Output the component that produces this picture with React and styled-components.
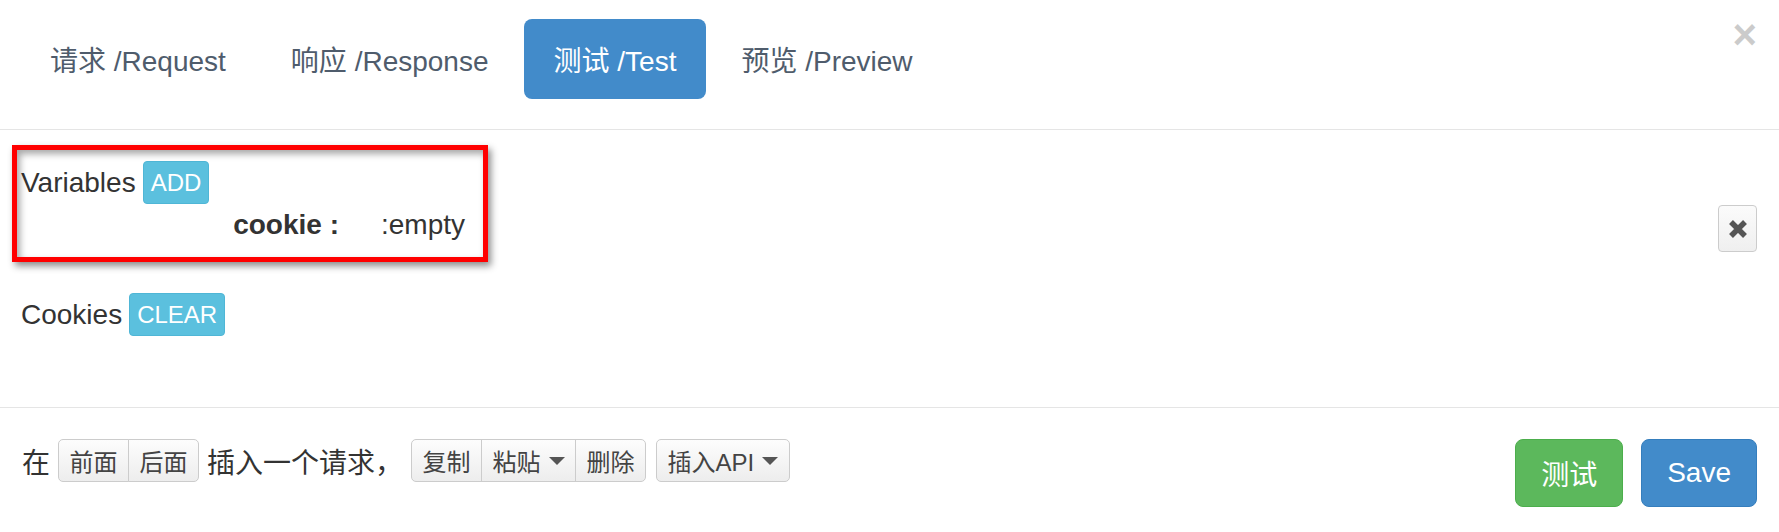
import React from 'react';
import styled, { createGlobalStyle } from 'styled-components';

const GlobalStyle = createGlobalStyle`
  html, body {
    margin: 0;
    padding: 0;
    background: #fff;
  }
  body {
    font-family: "Liberation Sans", Arial, "Noto Sans CJK SC", sans-serif;
    color: #333;
  }
`;

const Modal = styled.div`
  width: 1779px;
  height: 532px;
  background: #fff;
  display: flex;
  flex-direction: column;
`;

const Header = styled.div`
  display: flex;
  align-items: flex-start;
  padding: 19px 22px 30px 20px;
  border-bottom: 1px solid #e5e5e5;
`;

const Tabs = styled.ul`
  display: flex;
  gap: 5px;
  list-style: none;
  margin: 0;
  padding: 0;
`;

const Tab = styled.li`
  height: 80px;
  padding: 0 30px;
  display: flex;
  align-items: center;
  font-size: 28px;
  border-radius: 8px;
  color: ${p => (p.$active ? '#fff' : '#4f5c6c')};
  background: ${p => (p.$active ? '#428bca' : 'transparent')};
  cursor: pointer;
`;

const Close = styled.button`
  margin-left: auto;
  margin-top: 1px;
  border: none;
  background: none;
  padding: 0;
  font-family: "Liberation Sans", Arial, sans-serif;
  font-size: 42px;
  font-weight: bold;
  line-height: 30px;
  color: #000;
  opacity: 0.2;
  cursor: pointer;
`;

const Body = styled.div`
  position: relative;
  height: 277px;
  box-sizing: border-box;
  padding: 31px 22px 0 21px;
  font-size: 28px;
`;

const Row = styled.div`
  display: flex;
  align-items: center;
  gap: 7px;
  height: 43px;
`;

const Label = styled.span`
  display: inline-block;
  font-size: 24px;
  line-height: 41px;
  padding: 0 7px;
  color: #fff;
  background: #5bc0de;
  border: 1px solid #4fb6d6;
  border-radius: 4px;
`;

const VarRow = styled.div`
  display: flex;
  align-items: flex-start;
  height: 47px;
  margin-top: 1px;
`;

const VarKey = styled.span`
  width: 318px;
  text-align: right;
  font-weight: bold;
  line-height: 40px;
  white-space: pre;
`;

const VarValue = styled.span`
  margin-left: 42px;
  line-height: 40px;
`;

const RemoveButton = styled.button`
  margin-left: auto;
  width: 39px;
  height: 47px;
  padding: 0;
  display: flex;
  align-items: center;
  justify-content: center;
  background: linear-gradient(#fbfbfb, #efefef);
  border: 1px solid #ccc;
  border-radius: 4px;
  color: #555;
`;

const CookiesRow = styled(Row)`
  margin-top: 41px;
`;

const Annotation = styled.div`
  position: absolute;
  left: 12px;
  top: 15px;
  width: 476px;
  height: 117px;
  box-sizing: border-box;
  border: 5px solid #ff0000;
  box-shadow: 3px 4px 7px rgba(0, 0, 0, 0.45), inset 3px 4px 7px rgba(0, 0, 0, 0.35);
  pointer-events: none;
`;

const Footer = styled.div`
  flex: 1;
  display: flex;
  align-items: flex-start;
  padding: 31px 22px 0 22px;
  border-top: 1px solid #e5e5e5;
`;

const Inline = styled.div`
  display: flex;
  align-items: center;
  height: 43px;
  font-size: 28px;
`;

const Text = styled.span`
  margin-right: 8px;
`;

const Group = styled.div`
  display: flex;
  margin-right: ${p => p.$gap || 8}px;
`;

const SmallButton = styled.button`
  display: flex;
  align-items: center;
  gap: 8px;
  height: 43px;
  box-sizing: border-box;
  padding: 0 10.5px;
  font-family: "Liberation Sans", Arial, "Noto Sans CJK SC", sans-serif;
  font-size: 24px;
  color: #444;
  background: linear-gradient(#fdfdfd, #ededed);
  border: 1px solid #ccc;
  border-radius: 0;
  & + & {
    margin-left: -1px;
  }
  &:first-child {
    border-top-left-radius: 5px;
    border-bottom-left-radius: 5px;
  }
  &:last-child {
    border-top-right-radius: 5px;
    border-bottom-right-radius: 5px;
  }
`;

const Caret = styled.span`
  width: 0;
  height: 0;
  border-top: 8px solid #555;
  border-left: 8px solid transparent;
  border-right: 8px solid transparent;
`;

const Actions = styled.div`
  margin-left: auto;
  display: flex;
  gap: 18px;
`;

const BigButton = styled.button`
  height: 68px;
  padding: 0 25px;
  font-family: "Liberation Sans", Arial, "Noto Sans CJK SC", sans-serif;
  font-size: 28px;
  color: #fff;
  border-radius: 8px;
  background: ${p => (p.$variant === 'success' ? '#5cb85c' : '#428bca')};
  border: 1px solid ${p => (p.$variant === 'success' ? '#4cae4c' : '#357ebd')};
`;

const RemoveIcon = () => (
  <svg width="20" height="20" viewBox="0 0 20 20">
    <path d="M3 3 L17 17 M17 3 L3 17" stroke="currentColor" strokeWidth="5.5" />
  </svg>
);

const tabs = ['请求 /Request', '响应 /Response', '测试 /Test', '预览 /Preview'];

export default function App() {
  return (
    <Modal>
      <GlobalStyle />
      <Header>
        <Tabs>
          {tabs.map((t, i) => (
            <Tab key={t} $active={i === 2}>{t}</Tab>
          ))}
        </Tabs>
        <Close>×</Close>
      </Header>

      <Body>
        <Row>
          <span>Variables</span>
          <Label>ADD</Label>
        </Row>
        <VarRow>
          <VarKey>cookie :</VarKey>
          <VarValue>:empty</VarValue>
          <RemoveButton><RemoveIcon /></RemoveButton>
        </VarRow>
        <CookiesRow>
          <span>Cookies</span>
          <Label>CLEAR</Label>
        </CookiesRow>
        <Annotation />
      </Body>

      <Footer>
        <Inline>
          <Text>在</Text>
          <Group>
            <SmallButton>前面</SmallButton>
            <SmallButton>后面</SmallButton>
          </Group>
          <Text>插入一个请求，</Text>
          <Group $gap={10}>
            <SmallButton>复制</SmallButton>
            <SmallButton>粘贴 <Caret /></SmallButton>
            <SmallButton>删除</SmallButton>
          </Group>
          <Group>
            <SmallButton>插入API <Caret /></SmallButton>
          </Group>
        </Inline>
        <Actions>
          <BigButton $variant="success">测试</BigButton>
          <BigButton>Save</BigButton>
        </Actions>
      </Footer>
    </Modal>
  );
}
